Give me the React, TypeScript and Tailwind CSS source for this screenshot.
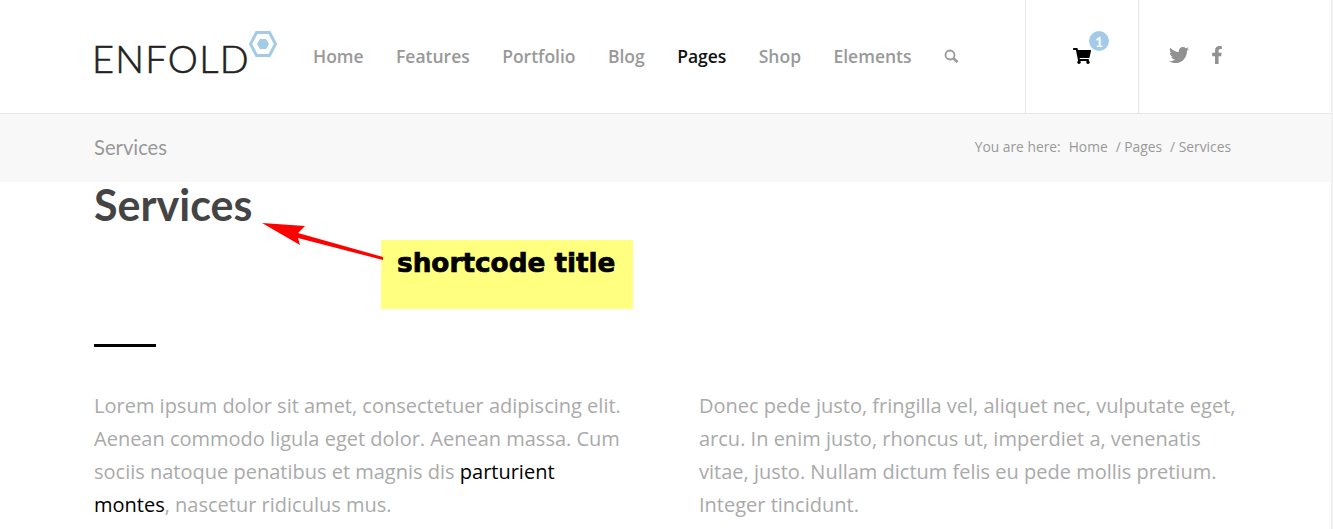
import { FaFacebookF, FaShoppingCart, FaTwitter } from "react-icons/fa";

const navItems = ["Home", "Features", "Portfolio", "Blog", "Pages", "Shop", "Elements"];

function Logo() {
  return (
    <div className="relative w-[219px] h-full flex items-center shrink-0">
      <span className="font-['Lato',sans-serif] font-light text-[38px] leading-none tracking-[1.300px] text-[#222] ml-[-2px] mt-[2px] [-webkit-text-stroke:0.6px_#222]">
        ENFOLD
      </span>
      <svg className="absolute left-[154px] top-[30px]" width="30" height="28" viewBox="0 0 30 28">
        <path d="M8.500 2.500h13L27.500 14l-6 11.500h-13L2.500 14z" fill="none" stroke="#a3cbe8" strokeWidth="3" />
        <path d="M12 9h6l3 5-3 5h-6l-3-5z" fill="#a3cbe8" />
      </svg>
    </div>
  );
}

function SearchIcon() {
  return (
    <svg width="15" height="14" viewBox="0 0 15 14" fill="none" stroke="#999">
      <circle cx="6" cy="6" r="4.500" strokeWidth="1.800" />
      <path d="M9.500 9.500L13.500 13" strokeWidth="2.600" />
    </svg>
  );
}

function Header() {
  return (
    <header className="h-[114px] border-b border-[#e6e6e6] flex pl-[94px] shrink-0">
      <Logo />
      <nav className="flex items-center gap-[32.400px] font-['Open_Sans',sans-serif] text-[17.500px] font-semibold text-[#999] w-[712px] pb-[1px]">
        {navItems.map((item) => (
          <span key={item} className={item === "Pages" ? "text-[#111]" : ""}>
            {item}
          </span>
        ))}
        <SearchIcon />
      </nav>
      <div className="w-[114px] border-x border-[#e6e6e6] flex items-center justify-center">
        <div className="relative mt-[-1px]">
          <FaShoppingCart className="text-[18px] text-black" />
          <span className="absolute left-[16px] top-[-16px] w-5 h-5 rounded-full bg-[#a3cbe8] text-white text-[14px] font-bold flex items-center justify-center">
            1
          </span>
        </div>
      </div>
      <div className="flex items-center gap-[19px] pl-[30px] text-[#919191] text-[20px] pb-[4px]">
        <FaTwitter />
        <FaFacebookF className="text-[18px]" />
      </div>
    </header>
  );
}

function TitleBar() {
  return (
    <div className="h-[68px] bg-[#f8f8f8] flex items-center justify-between pl-[94px] pr-[100px] shrink-0">
      <h2 className="text-[20.200px] text-[#999] mt-[-2px]">Services</h2>
      <div className="flex font-['Open_Sans',sans-serif] text-[13.800px] text-[#999] mt-[-2px]">
        <span className="mr-2">You are here:</span>
        <span className="mr-2">Home</span>
        <span className="mr-2">/ Pages</span>
        <span>/ Services</span>
      </div>
    </div>
  );
}

function Annotation() {
  return (
    <>
      <div className="absolute left-[381px] top-[240px] w-[252px] h-[69px] bg-[#ffff80] pl-4 pt-[5px] font-['DejaVu_Sans',sans-serif] font-bold text-[26.300px] leading-[36px] text-black whitespace-nowrap [-webkit-text-stroke:0.7px_black]">
        shortcode title
      </div>
      <svg className="absolute left-[255px] top-[215px]" width="135" height="50" viewBox="0 0 135 50">
        <path d="M7 8L50 11 43 18 128 42 128 45 43 23 45 30z" fill="#ff0000" />
      </svg>
    </>
  );
}

export default function App() {
  return (
    <div className="relative w-[1333px] h-[529px] overflow-hidden bg-white border-r-2 border-[#f0f0f0] flex flex-col font-['Lato',sans-serif]">
      <Header />
      <TitleBar />
      <main className="pl-[94px]">
        <h1 className="text-[43px] leading-[48px] font-bold text-[#444] mt-[-1px]">Services</h1>
        <div className="w-[62px] h-[3px] bg-black mt-[115px]" />
        <div className="grid grid-cols-[535px_537px] gap-[70px] mt-[42px] font-['Open_Sans',sans-serif] text-[20px] leading-[33px] text-[#aaa]">
          <p>
            Lorem ipsum dolor sit amet, consectetuer adipiscing elit. Aenean commodo ligula eget dolor. Aenean massa. Cum
            sociis natoque penatibus et magnis dis <span className="text-black">parturient montes</span>, nascetur
            ridiculus mus.
          </p>
          <p>
            Donec pede justo, fringilla vel, aliquet nec, vulputate eget, arcu. In enim justo, rhoncus ut, imperdiet a,
            venenatis vitae, justo. Nullam dictum felis eu pede mollis pretium. Integer tincidunt.
          </p>
        </div>
      </main>
      <Annotation />
    </div>
  );
}
